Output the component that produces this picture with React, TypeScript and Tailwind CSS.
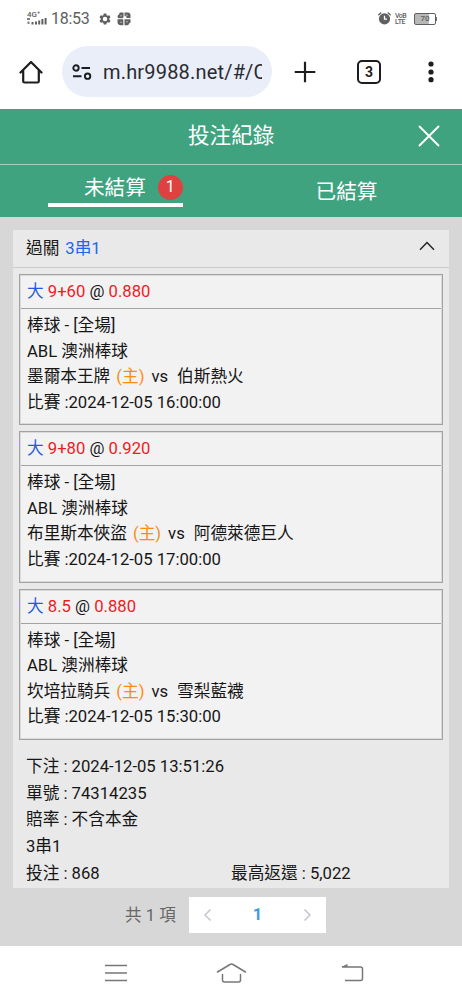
import React from 'react';

type Bet = { line: string; odds: string; home: string; away: string; time: string };

const bets: Bet[] = [
  { line: '9+60', odds: '0.880', home: '墨爾本王牌', away: '伯斯熱火', time: '2024-12-05 16:00:00' },
  { line: '9+80', odds: '0.920', home: '布里斯本俠盜', away: '阿德萊德巨人', time: '2024-12-05 17:00:00' },
  { line: '8.5', odds: '0.880', home: '坎培拉騎兵', away: '雪梨藍襪', time: '2024-12-05 15:30:00' },
];

function StatusBar() {
  return (
    <div className="flex h-[37px] items-center pl-[27px] pr-[25px] text-[#606060]">
      <div className="flex w-[20px] flex-col">
        <span className="h-[6px] text-[8px] leading-[6px] font-medium">4G⁺</span>
        <svg width="20" height="7" viewBox="0 0 20 7" fill="currentColor">
          <path d="M0 0h3v2H0zM.5 3.500h2V6h-2z" opacity=".8" />
          <path d="M4.500 4h2v2.500h-2zM8 3.500h2v3H8zM11.200 2.500h2v4h-2zM14.400 1h2v5.500h-2zM17.600 0h2v6.500h-2z" />
        </svg>
      </div>
      <span className="ml-[4px] w-[40px] text-[16px] leading-none tracking-[-0.3px]">18:53</span>
      <svg className="ml-[8px]" width="12" height="12" viewBox="0 0 24 24" fill="currentColor" fillRule="evenodd">
        <path d="M9.500 1h5l.8 3.400 2 1.100 3.300-1 2.400 4.200-2.500 2.400v2l2.500 2.400-2.400 4.200-3.300-1-2 1.100-.8 3.300h-5l-.8-3.300-2-1.100-3.300 1L1 15.500l2.500-2.400v-2L1 8.700l2.400-4.200 3.300 1 2-1.100zM12 7.500a4.500 4.500 0 1 0 0 9 4.500 4.500 0 0 0 0-9z" />
      </svg>
      <svg className="ml-[6px]" width="14" height="14" viewBox="0 0 14 14" fill="currentColor">
        <path d="M3.500.5h3v4.800l-1 1H2A1.800 1.800 0 0 1 .5 4.500C.5 3 1.500 3 2 2.500S2 .5 3.500.5zM7.500.5H11c1.500 0 2.500 1 2.500 2.500v3h-4V4.500l-2-.5zM.5 7.200h5.800v6H4c-2 0-3.500-1-3.500-3zM7.500 7.200h6v3c0 .8-1 .8-1.500 1.300s0 1.800-1.500 1.800h-3z" />
        <path d="M3 3.800h2M8.500 3.200h2.500M3 10.200h2M9 9.800h2" stroke="#fff" strokeWidth=".5" />
      </svg>
      <div className="ml-auto flex items-center">
        <svg width="13" height="13" viewBox="0 0 13 13">
          <circle cx="6.500" cy="6.900" r="5.600" fill="currentColor" />
          <path d="M.8 2.800 2.800 1M12.200 2.800 10.200 1" stroke="currentColor" strokeWidth="1.400" strokeLinecap="round" />
          <path d="M6.500 3.700v3.500H9" fill="none" stroke="#fff" strokeWidth="1.300" />
        </svg>
        <div className="ml-[4px] flex w-[12px] flex-col text-[7px] leading-[6px] font-medium">
          <span className="tracking-[-0.6px]">VoB</span>
          <span className="tracking-[-0.3px]">LTE</span>
        </div>
        <div className="ml-[7px] flex h-[12px] w-[22px] items-center justify-center rounded-[2px] border border-[#606060] bg-linear-to-r from-[#b8b8b8] from-70% to-white to-70% text-[8px] leading-none font-medium">70</div>
        <div className="h-[4px] w-[1px] bg-[#707070]" />
      </div>
    </div>
  );
}

function BrowserBar() {
  return (
    <div className="flex h-[72px] items-start pt-[9px] text-[#1c1d20]">
      <svg className="mt-[14px] ml-[19px]" width="24" height="24" viewBox="0 0 24 24" fill="none" stroke="currentColor" strokeWidth="2.200" strokeLinejoin="round" strokeLinecap="round">
        <path d="M1.500 12.500 12 2l10.500 10.500M4.200 10v11.200q0 1.300 1.300 1.300h13q1.300 0 1.300-1.300V10" />
      </svg>
      <div className="ml-[19px] flex h-[51px] w-[210px] items-center rounded-full bg-[#e9eef9] pl-[10px]">
        <svg width="20" height="16" viewBox="0 0 20 16" fill="none" stroke="currentColor" strokeWidth="1.900">
          <circle cx="4" cy="4" r="2.700" />
          <path d="M9.500 4H18M1 12.200h8.500" />
          <circle cx="15.600" cy="12.200" r="2.700" />
        </svg>
        <div className="ml-[11px] w-[159px] overflow-hidden pt-px text-[20px] leading-[26px] tracking-[0.180px] whitespace-nowrap text-[#2a2b30]">m.hr9988.net/#/C</div>
      </div>
      <svg className="mt-[15px] ml-[22px]" width="22" height="22" viewBox="0 0 22 22" stroke="currentColor" strokeWidth="2.200">
        <path d="M.7 11h20.600M11 .7v20.600" />
      </svg>
      <div className="mt-[14px] ml-[41px] flex h-[24px] w-[24px] items-center justify-center rounded-[5px] border-[2.200px] border-[#1c1d20] text-[14px] leading-none font-bold">3</div>
      <svg className="mt-[15px] ml-[47px]" width="6" height="22" viewBox="0 0 6 22" fill="currentColor">
        <circle cx="3" cy="3" r="2.600" />
        <circle cx="3" cy="11" r="2.600" />
        <circle cx="3" cy="18.700" r="2.600" />
      </svg>
    </div>
  );
}

function BetCard({ bet }: { bet: Bet }) {
  return (
    <div className="mb-[6px] h-[151.300px] border border-[#a2a2a2] bg-[#f2f2f2] text-[16.660px] outline-1 -outline-offset-2 outline-[#dadada]">
      <div className="h-[34px] border-b border-[#a2a2a2] pl-[7px] leading-[33px]">
        <span className="text-[#1f5be0]">大</span> <span className="text-[#ec1c24]">{bet.line}</span> @{' '}
        <span className="text-[#ec1c24]">{bet.odds}</span>
      </div>
      <div className="pt-[4px] pl-[7px] leading-[25.600px] whitespace-pre">
        <div>棒球 - [全場]</div>
        <div>ABL 澳洲棒球</div>
        <div>
          {bet.home}
          <span className="mr-[7px] ml-[6px] text-[#fb8c14]">(主)</span>
          {'vs'}
          <span className="ml-[9px]">{bet.away}</span>
        </div>
        <div>比賽 :{bet.time}</div>
      </div>
    </div>
  );
}

export default function App() {
  return (
    <div className="flex h-[1000px] w-[462px] flex-col overflow-hidden bg-white font-[Roboto,'Noto_Sans_CJK_TC',sans-serif] text-[#161616]">
      <StatusBar />
      <BrowserBar />
      <header className="bg-[#40a380] text-white">
        <div className="flex h-[56px] items-center border-b border-[#a5cfbd] pr-[22px] pl-[188px]">
          <h1 className="w-[90px] pb-[1px] text-[21.600px] leading-none whitespace-nowrap">投注紀錄</h1>
          <svg className="mb-[2px] ml-auto" width="22" height="22" viewBox="0 0 22 22" stroke="currentColor" strokeWidth="1.900" strokeLinecap="round">
            <path d="m1.500 1.500 19 19m0-19-19 19" />
          </svg>
        </div>
        <div className="flex h-[52px] text-[20.600px]">
          <div className="flex w-1/2 justify-center">
            <div className="flex h-[42px] w-[135px] items-center border-b-4 border-white pl-[36px]">
              <span className="pt-[9px] leading-[31px]">未結算</span>
              <span className="mt-[6px] ml-[12px] flex size-[25px] items-center justify-center rounded-full bg-[#df4040] text-[16px] leading-none">1</span>
            </div>
          </div>
          <div className="flex w-1/2 items-center justify-center pt-[2px]">已結算</div>
        </div>
      </header>
      <main className="flex h-[729px] flex-col bg-[#d7d7d7] px-[13px] pt-[13px]">
        <section className="h-[658px] bg-[#e9e9e9] text-[16.660px]">
          <div className="flex h-[38px] items-center border-b border-[#cbcbcb] pr-[14px] pl-[13px]">
            <span className="pt-[2px]">過關</span>
            <span className="ml-[6px] pt-[2px] text-[#2464ec]">3串1</span>
            <svg className="mb-[5px] ml-auto" width="16" height="10" viewBox="0 0 16 10" fill="none" stroke="#222" strokeWidth="1.400">
              <path d="m1 8.700 7-7.200 7 7.200" />
            </svg>
          </div>
          <div className="px-[6px] pt-[6px]">
            {bets.map((b) => (
              <BetCard key={b.time} bet={b} />
            ))}
          </div>
          <div className="pt-[8px] pl-[13px] leading-[26.800px]">
            <div>下注 : 2024-12-05 13:51:26</div>
            <div>單號 : 74314235</div>
            <div>賠率 : 不含本金</div>
            <div>3串1</div>
            <div className="flex">
              <span className="w-[205px]">投注 : 868</span>
              <span>最高返還 : 5,022</span>
            </div>
          </div>
        </section>
        <div className="mt-[9px] flex h-[36px] items-center pl-[112px] text-[16.600px] text-[#666]">
          <span className="w-[64px] pt-[2px] whitespace-nowrap">共 1 項</span>
          <div className="flex h-[36px] w-[137px] items-center justify-between bg-white px-[14px]">
            <svg width="9" height="14" viewBox="0 0 9 14" fill="none" stroke="#c3c6cc" strokeWidth="1.500"><path d="M7.500 1.500 2 7l5.500 5.500" /></svg>
            <span className="font-bold text-[#409ae6]">1</span>
            <svg width="9" height="14" viewBox="0 0 9 14" fill="none" stroke="#c3c6cc" strokeWidth="1.500"><path d="M1.500 1.500 7 7l-5.500 5.500" /></svg>
          </div>
        </div>
      </main>
      <nav className="flex h-[54px] items-center pl-[105px] text-[#777]">
        <svg width="22" height="20" viewBox="0 0 22 20" stroke="currentColor" strokeWidth="1.500"><path d="M0 2.500h22M0 10h22M0 17.500h22" /></svg>
        <svg className="ml-[89px]" width="31" height="22" viewBox="0 0 31 22" fill="none" stroke="currentColor" strokeWidth="1.500" strokeLinecap="round" strokeLinejoin="round">
          <path d="M1.500 10 14 2.500q1.500-.9 3 0L29.500 10M6.500 12.500v5.500q0 2 2 2h14q2 0 2-2v-5.500" />
        </svg>
        <svg className="ml-[94px]" width="23" height="20" viewBox="0 0 23 20" fill="none" stroke="currentColor" strokeWidth="1.500" strokeLinejoin="round">
          <path d="M1 4h18.500q2 0 2 2v9.500q0 2-2 2H4" />
          <path d="M0 4 6.500 1v3z" fill="currentColor" stroke="none" />
        </svg>
      </nav>
    </div>
  );
}
